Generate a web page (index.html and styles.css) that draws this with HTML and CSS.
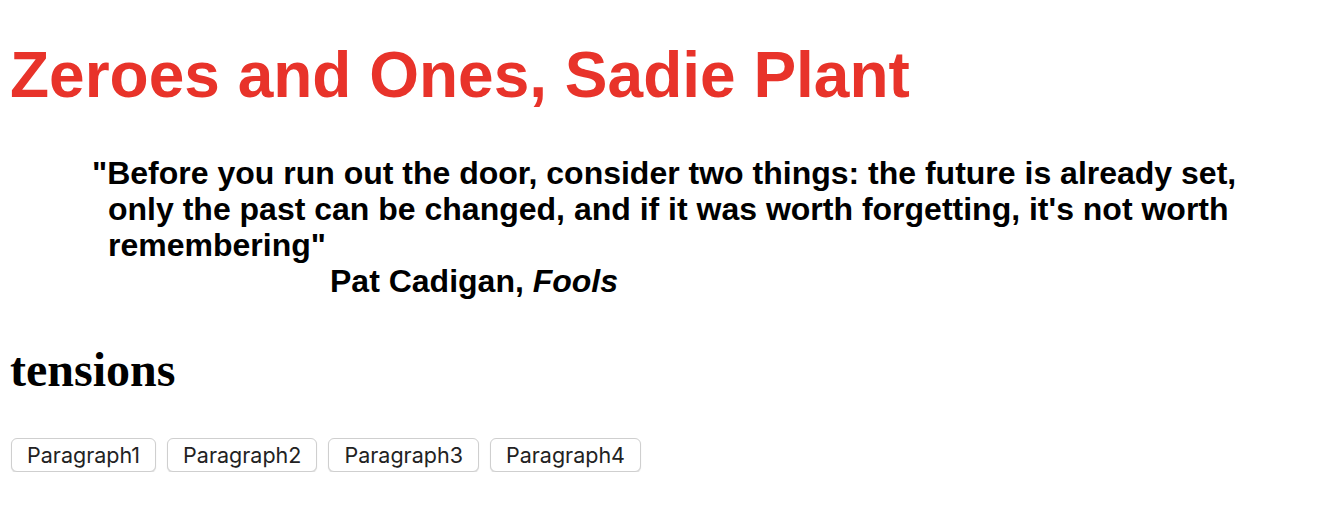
FILE: index.html
```html
<!DOCTYPE html>
<html>
<head>
<meta charset="utf-8">
<title>Zeroes and Ones</title>
<link rel="stylesheet" href="styles.css">
</head>
<body>
<h1 class="title">Zeroes and Ones, Sadie Plant</h1>
<blockquote class="quote">
  <p class="quote-text">"Before you run out the door, consider two things: the future is already set, only the past can be changed, and if it was worth forgetting, it's not worth remembering"</p>
  <p class="quote-cite">Pat Cadigan, <em>Fools</em></p>
</blockquote>
<h2 class="section">tensions</h2>
<div class="buttons">
  <button class="btn">Paragraph1</button>
  <button class="btn">Paragraph2</button>
  <button class="btn">Paragraph3</button>
  <button class="btn">Paragraph4</button>
</div>
</body>
</html>
```

FILE: styles.css
```css
html, body {
  margin: 0;
  padding: 0;
  background: #ffffff;
}
body {
  padding: 0 10px;
  font-family: "Liberation Serif", serif;
  color: #000;
}
.title {
  font-family: "Liberation Sans", Arial, sans-serif;
  font-weight: bold;
  font-size: 64px;
  line-height: 74px;
  color: #e8332a;
  margin: 38px 0 0 0;
}
.quote {
  margin: 43px 0 0 82px;
  font-family: "Liberation Sans", Arial, sans-serif;
  font-weight: bold;
  font-size: 32px;
  line-height: 36px;
}
.quote-text {
  margin: 0;
  padding-left: 16px;
  text-indent: -16px;
  width: 1160px;
}
.quote-cite {
  margin: 0 0 0 238px;
}
.section {
  font-family: "Liberation Serif", "Times New Roman", serif;
  font-weight: bold;
  font-size: 48px;
  line-height: 56px;
  margin: 43px 0 0 0;
}
.buttons {
  display: flex;
  gap: 11px;
  margin-top: 40px;
  padding-left: 1px;
}
.btn {
  font-family: Inter, "Noto Sans", sans-serif;
  font-size: 21.5px;
  color: #222;
  background: #fff;
  border: 1px solid #cfcfcf;
  border-radius: 6px;
  box-shadow: 0 1px 1px rgba(0,0,0,0.14);
  height: 34px;
  padding: 0 15px;
}
```
